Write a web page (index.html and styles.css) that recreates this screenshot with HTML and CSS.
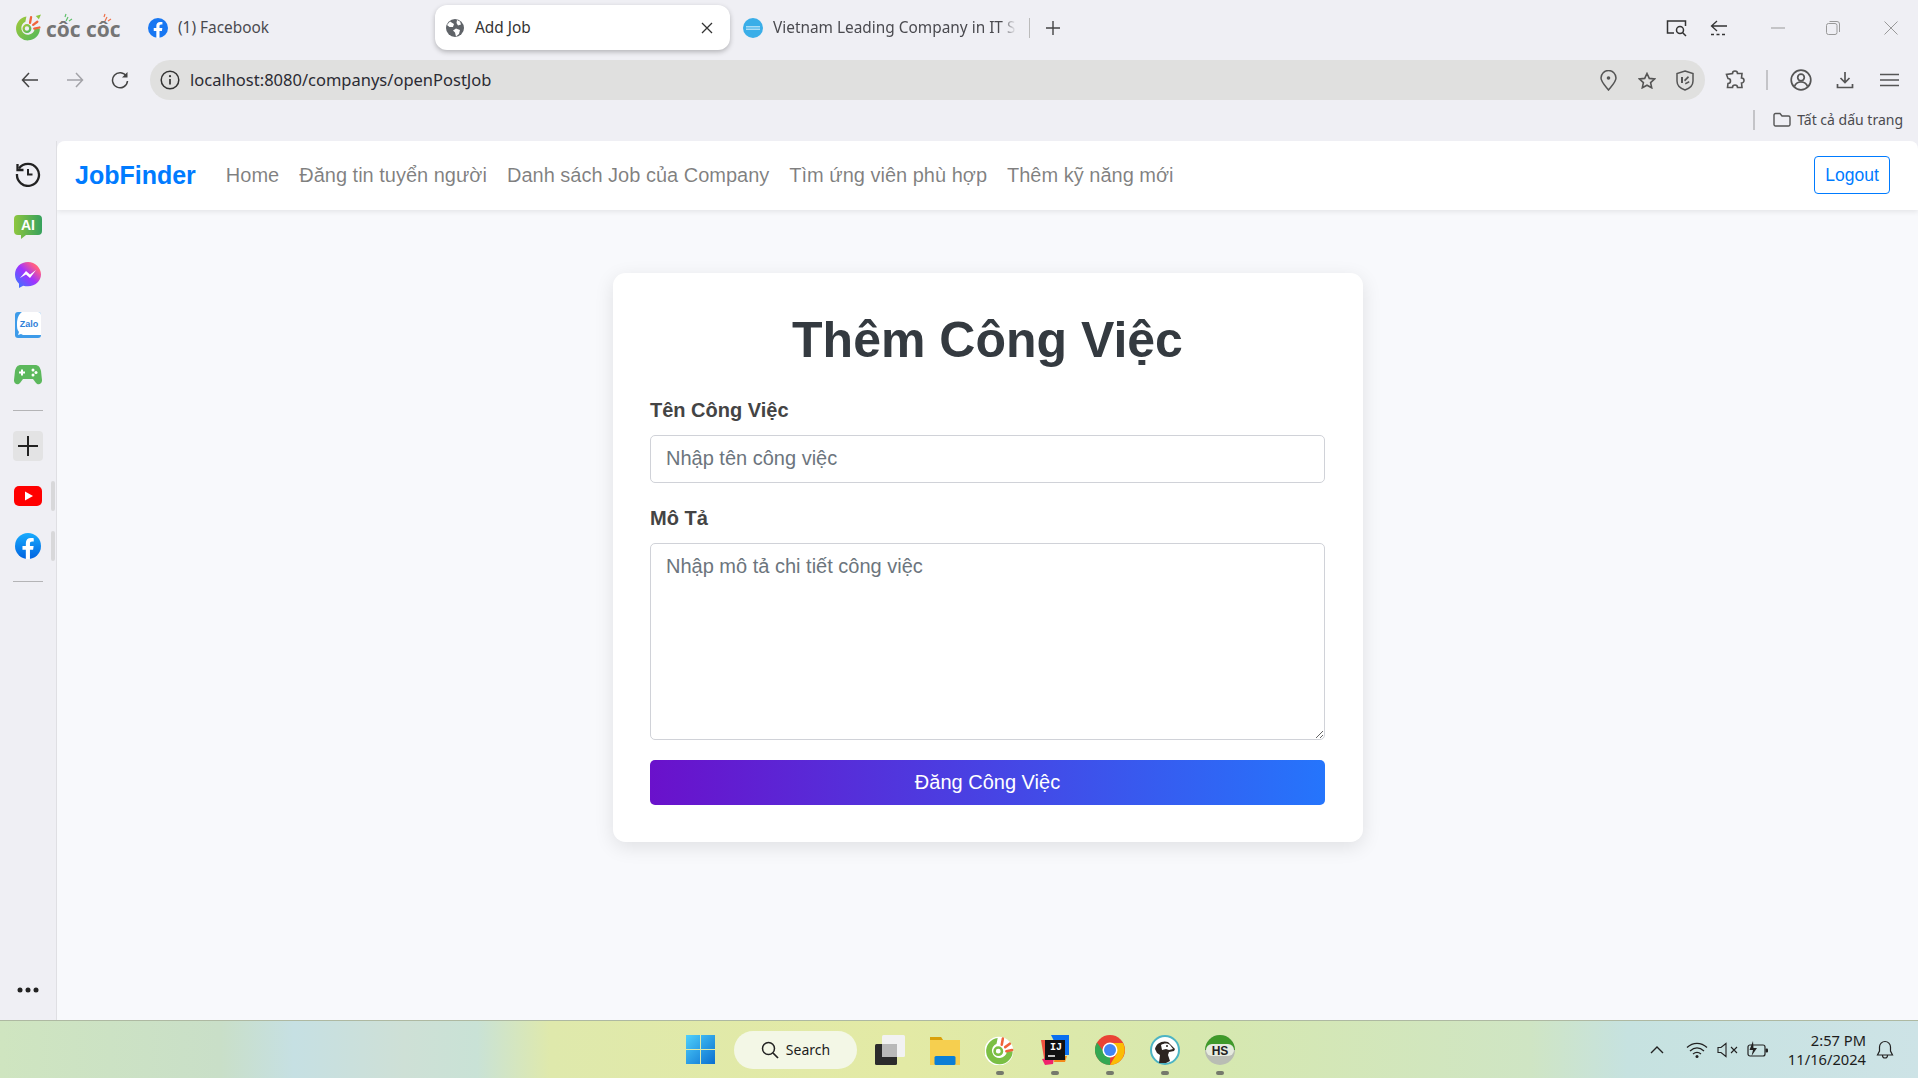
FILE: index.html
```html
<!DOCTYPE html>
<html lang="en">
<head>
  <meta charset="UTF-8">
  <meta name="viewport" content="width=device-width, initial-scale=1.0">
  <title>Add Job</title>
  <link rel="stylesheet" href="styles.css">
</head>
<body>
  <!-- Browser tabs -->
  <div class="tabstrip">
    <div class="brand">
      <svg class="brand-icon" width="27" height="27" viewBox="0 0 26 26">
        <defs><linearGradient id="cc" x1="0" y1="0" x2="1" y2="1"><stop offset="0" stop-color="#a4c93a"/><stop offset="1" stop-color="#4fb75a"/></linearGradient></defs>
        <path d="M11 2.500A11.500 11.500 0 1 0 24 14h-5A6.500 6.500 0 1 1 10 7.500z" fill="url(#cc)"/>
        <circle cx="11.500" cy="14" r="3.200" fill="none" stroke="url(#cc)" stroke-width="2.200"/>
        <path d="M14.500 8.500 15.500 3M17.500 10.500l4-3M18.500 14l5-1" stroke="#f0643a" stroke-width="2.200" stroke-linecap="round"/>
        <path d="M20 2l5-1.500-2 4.500z" fill="#8cc63f"/>
      </svg>
      <span class="brand-text">côc côc
        <svg class="brand-tick brand-tick-a" width="9" height="9" viewBox="0 0 9 9"><path d="M2 8 4 4M5 8l3-2M1 4l1-3" stroke="#5fbf6a" stroke-width="1.200"/></svg>
        <svg class="brand-tick brand-tick-b" width="9" height="9" viewBox="0 0 9 9"><path d="M2 8 4 4M5 8l3-2M1 4l1-3" stroke="#ee7048" stroke-width="1.200"/></svg>
      </span>
    </div>

    <div class="tab tab-fb">
      <svg width="20" height="20" viewBox="0 0 24 24"><circle cx="12" cy="12" r="12" fill="#1877f2"/><path d="M16.700 15.500l.5-3.500h-3.400V9.800c0-1 .5-1.900 2-1.900h1.500v-3s-1.400-.2-2.700-.2c-2.800 0-4.600 1.700-4.600 4.700V12H6.900v3.500H10V24h3.800v-8.500z" fill="#fff"/></svg>
      <span>(1) Facebook</span>
    </div>

    <div class="tab tab-active">
      <svg width="18" height="18" viewBox="0 0 18 18"><circle cx="9" cy="9" r="9" fill="#5f6368"/><path d="M4 2.500 8 5 7 8 3.500 8 1 6zM10 9.500l4 1.500-1 4-3 2.500-1-4-2-2zM11 1l3 1.500 1 3-3 1-1.500-2.500z" fill="#fff"/></svg>
      <span class="tab-title">Add Job</span>
      <svg width="12" height="12" viewBox="0 0 12 12"><path d="M1 1l10 10M11 1 1 11" stroke="#333" stroke-width="1.300"/></svg>
    </div>

    <div class="tab tab-vn">
      <svg width="20" height="20" viewBox="0 0 20 20"><circle cx="10" cy="10" r="10" fill="#3aaee8"/><rect x="3" y="8" width="14" height="1.500" fill="#a9dcf5"/><rect x="3" y="10.500" width="14" height="1.500" fill="#a9dcf5"/></svg>
      <span class="tab-fade">Vietnam Leading Company in IT S</span>
    </div>
    <span class="tab-sep"></span>
    <svg class="tab-new" width="16" height="16" viewBox="0 0 16 16"><path d="M8 1v14M1 8h14" stroke="#444" stroke-width="1.400"/></svg>

    <div class="window-btns">
      <svg class="capture" width="22" height="18" viewBox="0 0 22 18"><path d="M8 14H1.500V2h18v5" fill="none" stroke="#333" stroke-width="1.500"/><circle cx="14" cy="11" r="3.500" fill="none" stroke="#333" stroke-width="1.500"/><path d="M16.500 13.500 20 17" stroke="#333" stroke-width="1.500"/></svg>
      <svg class="sidepanel" width="18" height="16" viewBox="0 0 18 16"><path d="M7 1 1.500 6 7 11M2 6h15" fill="none" stroke="#333" stroke-width="1.300"/><path d="M1 14.500h16" stroke="#333" stroke-width="1.300" stroke-dasharray="3 2.500"/></svg>
      <svg class="win-min" width="14" height="14" viewBox="0 0 14 14"><path d="M0 7h14" stroke="#999" stroke-width="1"/></svg>
      <svg class="win-max" width="14" height="14" viewBox="0 0 14 14"><rect x=".5" y="2.500" width="10.500" height="11" rx="2" fill="none" stroke="#999"/><path d="M3.500.5H11A2.500 2.500 0 0 1 13.500 3v8" fill="none" stroke="#999"/></svg>
      <svg class="win-close" width="14" height="14" viewBox="0 0 14 14"><path d="M.5.5l13 13M13.500.5l-13 13" stroke="#999" stroke-width="1"/></svg>
    </div>
  </div>

  <!-- Address bar row -->
  <div class="toolbar">
    <svg class="nav-back" width="18" height="16" viewBox="0 0 18 16"><path d="M8 1 1.500 8 8 15M2 8h15" fill="none" stroke="#444" stroke-width="1.500"/></svg>
    <svg class="nav-fwd" width="18" height="16" viewBox="0 0 18 16"><path d="M10 1l6.500 7L10 15M16 8H1" fill="none" stroke="#a3a3a8" stroke-width="1.500"/></svg>
    <svg class="nav-reload" width="18" height="18" viewBox="0 0 18 18"><path d="M15.500 5.500A7.500 7.500 0 1 0 16.500 10" fill="none" stroke="#444" stroke-width="1.500"/><path d="M16.500 1v5.500H11z" fill="#444"/></svg>
    <div class="omnibox">
      <svg width="20" height="20" viewBox="0 0 20 20"><circle cx="10" cy="10" r="8.800" fill="none" stroke="#333" stroke-width="1.500"/><path d="M10 9v5.500" stroke="#333" stroke-width="1.700"/><circle cx="10" cy="6.200" r="1.100" fill="#333"/></svg>
      <span class="url">localhost:8080/companys/openPostJob</span>
      <svg class="omni-pin" width="17" height="21" viewBox="0 0 17 21"><path d="M8.500 20C4 14.500 1 11.500 1 8a7.500 7.500 0 0 1 15 0c0 3.500-3 6.500-7.500 12z" fill="none" stroke="#555" stroke-width="1.500"/><circle cx="8.500" cy="8" r="1.800" fill="#555"/></svg>
      <svg class="omni-star" width="18" height="17" viewBox="0 0 18 17"><path d="M9 1.500l2.300 4.900 5.200.6-3.900 3.600 1.100 5.200L9 13.200l-4.700 2.600 1.100-5.200L1.500 7l5.200-.6z" fill="none" stroke="#555" stroke-width="1.600"/></svg>
      <svg class="omni-shield" width="18" height="21" viewBox="0 0 18 21"><path d="M9 1l8 2.500V11c0 4.500-3.500 7.500-8 9-4.500-1.500-8-4.500-8-9V3.500z" fill="none" stroke="#555" stroke-width="1.500"/><path d="M5 13V7h2v6zM8 10l4-4 1 1.500-4 4zM9 13l4-2 .5 1.500-4 2z" fill="#555"/></svg>
    </div>
    <svg class="tool-ext" width="20" height="20" viewBox="0 0 20 20"><path d="M7.500 3.500a2.500 2.500 0 0 1 5 0H17l-.5 4.500a2.500 2.500 0 0 1 0 5l.5 4.500h-4.500a2.500 2.500 0 0 0-5 0H2.500L3 13.500a2.500 2.500 0 0 0 0-5L1.500 4.500z" fill="none" stroke="#555" stroke-width="1.600"/></svg>
    <span class="tool-sep"></span>
    <svg class="tool-profile" width="22" height="22" viewBox="0 0 22 22"><circle cx="11" cy="11" r="9.800" fill="none" stroke="#555" stroke-width="1.700"/><circle cx="11" cy="8.500" r="3.300" fill="none" stroke="#555" stroke-width="1.700"/><path d="M4.500 17.500c1-3 3.500-4.500 6.500-4.500s5.500 1.500 6.500 4.500" fill="none" stroke="#555" stroke-width="1.700"/></svg>
    <svg class="tool-down" width="18" height="18" viewBox="0 0 18 18"><path d="M9 1v10M4.500 7 9 11.500 13.500 7M1.500 13v3.500h15V13" fill="none" stroke="#555" stroke-width="1.700"/></svg>
    <svg class="tool-menu" width="19" height="14" viewBox="0 0 19 14"><path d="M0 1.500h19M0 7h19M0 12.500h19" stroke="#555" stroke-width="1.700"/></svg>
  </div>

  <!-- Bookmarks row -->
  <div class="bookmarks">
    <span class="bm-sep"></span>
    <svg width="18" height="15" viewBox="0 0 18 15"><path d="M1 3a1.500 1.500 0 0 1 1.500-1.500H7L9 4h6.500A1.500 1.500 0 0 1 17 5.500v7a1.500 1.500 0 0 1-1.500 1.500h-13A1.500 1.500 0 0 1 1 12.500z" fill="none" stroke="#555" stroke-width="1.400"/></svg>
    <span class="bm-label">Tất cả dấu trang</span>
  </div>

  <div class="main">
    <!-- Left sidebar -->
    <div class="sidebar">
      <div class="side-item side-history">
        <svg width="26" height="26" viewBox="0 0 26 26"><path d="M4 7.500A11 11 0 1 1 2 13" fill="none" stroke="#222" stroke-width="2.300"/><path d="M2.500 3v6h6" fill="none" stroke="#222" stroke-width="2.300"/><path d="M13 8v5.500h4.500" fill="none" stroke="#222" stroke-width="2"/></svg>
      </div>
      <div class="side-item side-ai">
        <svg width="28" height="25" viewBox="0 0 28 25"><defs><linearGradient id="aig" x1="0" x2="1"><stop offset="0" stop-color="#8ec63f"/><stop offset="1" stop-color="#36a15d"/></linearGradient></defs><path d="M4 0h20a4 4 0 0 1 4 4v12a4 4 0 0 1-4 4H12l-5 4v-4H4a4 4 0 0 1-4-4V4a4 4 0 0 1 4-4z" fill="url(#aig)"/><text x="14" y="15" text-anchor="middle" class="svg-ai">AI</text></svg>
      </div>
      <div class="side-item">
        <svg width="26" height="26" viewBox="0 0 26 26"><defs><linearGradient id="msg" x1="0" y1="1" x2="1" y2="0"><stop offset="0" stop-color="#2a7fff"/><stop offset=".5" stop-color="#a033ff"/><stop offset=".8" stop-color="#ff5c87"/><stop offset="1" stop-color="#ff7a5c"/></linearGradient></defs><path d="M13 0C5.700 0 0 5.300 0 12.500c0 3.700 1.500 7 4 9.200V26l4.200-2.300c1.500.4 3.100.6 4.800.6 7.300 0 13-5.300 13-11.800S20.300 0 13 0z" fill="url(#msg)"/><path d="M5 16l6-7 4 3.500L21 8l-6 8-4-3.500z" fill="#fff"/></svg>
      </div>
      <div class="side-item">
        <svg width="26" height="26" viewBox="0 0 26 26"><rect width="26" height="26" rx="3" fill="#3d9be9"/><path d="M7 0h16a3 3 0 0 1 3 3v20H8l-2-1-3 1 1-3C2 18 2 15 2 12 2 6 4 2 7 0z" fill="#fff"/><text x="14" y="15" text-anchor="middle" class="svg-zalo">Zalo</text></svg>
      </div>
      <div class="side-item">
        <svg width="28" height="20" viewBox="0 0 28 20"><path d="M7 0h14c3.500 0 5 2 6 6l1 9c.3 3.500-3.500 6-6 3l-3-4H9l-3 4c-2.500 3-6.300.5-6-3l1-9c1-4 2.500-6 6-6z" fill="#5cb85c"/><path d="M5 7.500h6M8 4.500v6" stroke="#fff" stroke-width="2"/><circle cx="19" cy="5" r="1.500" fill="#fff"/><circle cx="19" cy="10" r="1.500" fill="#fff"/><circle cx="22" cy="7.500" r="1.500" fill="#fff"/></svg>
      </div>
      <div class="side-sep"></div>
      <div class="side-item">
        <div class="side-add">
          <svg width="20" height="20" viewBox="0 0 20 20"><path d="M10 0v20M0 10h20" stroke="#222" stroke-width="2"/></svg>
        </div>
      </div>
      <div class="side-item side-open">
        <svg width="28" height="20" viewBox="0 0 28 20"><rect width="28" height="20" rx="5" fill="#f00"/><path d="M11 5.500v9l8-4.500z" fill="#fff"/></svg>
      </div>
      <div class="side-item side-open">
        <svg width="26" height="26" viewBox="0 0 24 24"><defs><linearGradient id="fbg" x1="0" y1="0" x2="0" y2="1"><stop offset="0" stop-color="#18acfe"/><stop offset="1" stop-color="#0163e0"/></linearGradient></defs><circle cx="12" cy="12" r="12" fill="url(#fbg)"/><path d="M16.700 15.500l.5-3.500h-3.400V9.800c0-1 .5-1.900 2-1.900h1.500v-3s-1.400-.2-2.700-.2c-2.800 0-4.600 1.700-4.600 4.700V12H6.900v3.500H10V24h3.800v-8.500z" fill="#fff"/></svg>
      </div>
      <div class="side-sep"></div>
      <div class="side-item side-more">
        <svg width="22" height="6" viewBox="0 0 22 6"><circle cx="3" cy="3" r="2.500" fill="#222"/><circle cx="11" cy="3" r="2.500" fill="#222"/><circle cx="19" cy="3" r="2.500" fill="#222"/></svg>
      </div>
    </div>

    <!-- The page itself -->
    <div class="page">
      <nav class="navbar">
        <a class="navbar-brand" href="#">JobFinder</a>
        <a class="nav-link" href="#">Home</a>
        <a class="nav-link" href="#">Đăng tin tuyển người</a>
        <a class="nav-link" href="#">Danh sách Job của Company</a>
        <a class="nav-link" href="#">Tìm ứng viên phù hợp</a>
        <a class="nav-link" href="#">Thêm kỹ năng mới</a>
        <button class="btn-logout" type="button">Logout</button>
      </nav>

      <div class="form-container">
        <h1>Thêm Công Việc</h1>
        <form>
          <div class="form-group">
            <label for="title">Tên Công Việc</label>
            <input type="text" id="title" placeholder="Nhập tên công việc">
          </div>
          <div class="form-group">
            <label for="description">Mô Tả</label>
            <textarea id="description" placeholder="Nhập mô tả chi tiết công việc"></textarea>
          </div>
          <button class="btn-submit" type="submit">Đăng Công Việc</button>
        </form>
      </div>
    </div>
  </div>

  <!-- Windows taskbar -->
  <div class="taskbar">
    <svg class="task-start" width="29" height="29" viewBox="0 0 29 29"><defs><linearGradient id="win" x1="0" y1="0" x2="1" y2="1"><stop offset="0" stop-color="#4fd0fb"/><stop offset="1" stop-color="#0a6fd0"/></linearGradient></defs><path d="M0 0h14v14H0zM15 0h14v14H15zM0 15h14v14H0zM15 15h14v14H15z" fill="url(#win)"/></svg>
    <div class="task-search">
      <svg width="18" height="18" viewBox="0 0 18 18"><circle cx="7.500" cy="7.500" r="6" fill="none" stroke="#222" stroke-width="1.500"/><path d="M12 12l5 5" stroke="#222" stroke-width="1.700"/></svg>
      <span>Search</span>
    </div>
    <svg class="task-icon" width="30" height="30" viewBox="0 0 30 30"><rect x="0" y="9" width="22" height="21" rx="1.500" fill="#2b2b2b"/><rect x="7" y="0" width="23" height="22" rx="1.500" fill="#f2f2f2"/><rect x="7" y="9" width="15" height="13" fill="#b9b9b9"/></svg>
    <svg class="task-icon" width="30" height="30" viewBox="0 0 30 30"><path d="M0 2h11l2 3h17v25H0z" fill="#f6cf4f"/><path d="M0 2h11l2 3H0z" fill="#d9a00a"/><rect x="4" y="21" width="21" height="9" rx="1.500" fill="#0c7fd6" transform="translate(.5 0)"/></svg>
    <div class="task-icon task-running">
      <svg width="30" height="30" viewBox="0 0 26 26"><circle cx="12" cy="14" r="12.500" fill="#fff"/><path d="M11 2.500A11.500 11.500 0 1 0 24 14h-5A6.500 6.500 0 1 1 10 7.500z" fill="#7bbf44"/><circle cx="11.500" cy="14" r="3.200" fill="none" stroke="#7bbf44" stroke-width="2.200"/><path d="M14.500 8.500 15.500 3M17.500 10.500l4-3M18.500 14l5-1" stroke="#f0643a" stroke-width="2.200" stroke-linecap="round"/></svg>
    </div>
    <div class="task-icon task-running">
      <svg width="30" height="30" viewBox="0 0 30 30"><path d="M11 0h18v20l-8 0z" fill="#0a6ff0"/><path d="M1 5h10v22l-6 2z" fill="#f0523e"/><path d="M15 21h12l-2 6H14z" fill="#f48a1a"/><path d="M2 24 14 22l-1 7-8 1z" fill="#f0246c"/><rect x="5" y="5" width="20" height="20" fill="#111"/><text x="10" y="15" class="svg-ij">IJ</text><path d="M8 21h7" stroke="#fff" stroke-width="1.500"/></svg>
    </div>
    <div class="task-icon task-running">
      <svg width="30" height="30" viewBox="0 0 30 30"><circle cx="15" cy="15" r="15" fill="#ea4335"/><path d="M15 30A15 15 0 0 1 2 7.500L9 17l6 5z" fill="#34a853"/><path d="M15 8h13a15 15 0 0 1-13 22l7-12z" fill="#fbbc04"/><circle cx="15" cy="15" r="7.500" fill="#fff"/><circle cx="15" cy="15" r="6" fill="#4285f4"/></svg>
    </div>
    <div class="task-icon task-running">
      <svg width="30" height="30" viewBox="0 0 30 30"><circle cx="15" cy="15" r="14" fill="#fff" stroke="#4cb4c4" stroke-width="2"/><path d="M5 14c1-6 8-9 13-7l3 3 4 4-1 2-5 1-1 3 2 6-4 2H9l1-8-3-2z" fill="#2c2420"/><path d="M11 10c3-2 7-2 9 0l3 4-4 1-3-1-4 1z" fill="#fff"/><circle cx="17" cy="11" r="1" fill="#2c2420"/></svg>
    </div>
    <div class="task-icon task-running">
      <svg width="30" height="30" viewBox="0 0 30 30"><circle cx="15" cy="15" r="15" fill="#b9bdb4"/><path d="M0 15a15 15 0 0 1 30 0z" fill="#3f9a2a"/><rect x="1" y="9" width="28" height="12" rx="6" fill="#e6ebdf"/><text x="15" y="20" text-anchor="middle" class="svg-hs">HS</text></svg>
    </div>

    <div class="tray">
      <svg class="tray-up" width="14" height="8" viewBox="0 0 14 8"><path d="M1 7l6-6 6 6" fill="none" stroke="#222" stroke-width="1.400"/></svg>
      <div class="tray-group">
        <svg width="24" height="18" viewBox="0 0 24 18"><path d="M2 6.500c6-5.500 14-5.500 20 0M5 10c4.500-4 9.500-4 14 0M8 13c2.500-2 5.500-2 8 0" fill="none" stroke="#222" stroke-width="1.300"/><circle cx="12" cy="15.500" r="1.500" fill="#222"/></svg>
        <svg width="22" height="16" viewBox="0 0 22 16"><path d="M1 5.500h3L9 1.500v13l-5-4H1z" fill="none" stroke="#222" stroke-width="1.100"/><path d="M14 5l6 6M20 5l-6 6" stroke="#222" stroke-width="1.100"/></svg>
        <svg width="24" height="18" viewBox="0 0 24 18"><rect x="2" y="4" width="17" height="11" rx="2" fill="none" stroke="#222" stroke-width="1.200"/><rect x="19.500" y="7.500" width="2.500" height="4" rx="1" fill="#222"/><path d="M7 0 3.500 9H7l-1.500 6L11 7H7.500z" fill="#222"/></svg>
      </div>
      <div class="clock">
        <div>2:57 PM</div>
        <div>11/16/2024</div>
      </div>
      <svg class="tray-bell" width="18" height="20" viewBox="0 0 18 20"><path d="M9 1.500A5.500 5.500 0 0 0 3.500 7v4L1.500 15h15l-2-4V7A5.500 5.500 0 0 0 9 1.500zM6.500 15.500a2.500 2.500 0 0 0 5 0" fill="none" stroke="#222" stroke-width="1.200"/></svg>
    </div>
  </div>
</body>
</html>
```
FILE: styles.css
```css
* {
  box-sizing: border-box;
}
html, body {
  height: 100%;
}
body {
  margin: 0;
  display: flex;
  flex-direction: column;
  height: 1078px;
  overflow: hidden;
  background: #efeff4;
  font-family: "Liberation Sans", Arial, sans-serif;
}
svg {
  display: block;
  flex-shrink: 0;
}

/* browser chrome */
.tabstrip {
  display: flex;
  align-items: center;
  height: 55px;
  font-family: "Noto Sans", sans-serif;
  font-size: 15.4px;
  line-height: 20px;
  color: #4a4a4f;
}
.brand {
  display: flex;
  align-items: center;
  width: 148px;
  padding-left: 15px;
}
.brand-text {
  position: relative;
  margin-left: 4px;
  margin-top: 2px;
  font-family: "Open Sans", sans-serif;
  font-weight: 700;
  font-size: 21px;
  line-height: 20px;
  color: #757575;
  white-space: nowrap;
}
.brand-tick {
  position: absolute;
  top: -6px;
}
.brand-tick-a {
  left: 18px;
}
.brand-tick-b {
  left: 57px;
}
.tab {
  display: flex;
  align-items: center;
  height: 45px;
}
.tab span {
  padding-top: 1px;
}
.tab-fb {
  width: 287px;
  gap: 10px;
}
.tab-active {
  width: 295px;
  padding: 0 17px 0 11px;
  background: #fff;
  border-radius: 12px;
  box-shadow: 0 2px 5px rgba(0, 0, 0, .25);
  color: #333;
}
.tab-title {
  margin-left: 11px;
  flex: 1;
}
.tab-vn {
  margin-left: 13px;
  gap: 10px;
}
.tab-fade {
  display: block;
  width: 243px;
  white-space: nowrap;
  -webkit-mask-image: linear-gradient(to right, #000 94%, transparent);
  mask-image: linear-gradient(to right, #000 94%, transparent);
}
.tab-sep {
  width: 1px;
  height: 20px;
  margin-left: 13px;
  background: #bbb;
}
.tab-new {
  margin-left: 15px;
}
.window-btns {
  display: flex;
  align-items: center;
  margin-left: auto;
  padding-right: 20px;
}
.sidepanel {
  margin-left: 22px;
}
.win-min {
  margin-left: 43px;
}
.win-max {
  margin-left: 41px;
}
.win-close {
  margin-left: 44px;
}

.toolbar {
  display: flex;
  align-items: center;
  height: 40px;
  margin-top: 5px;
  padding-left: 21px;
}
.nav-fwd {
  margin-left: 27px;
}
.nav-reload {
  margin-left: 27px;
}
.omnibox {
  display: flex;
  align-items: center;
  width: 1555px;
  height: 40px;
  margin-left: 21px;
  padding: 0 11px 0 10px;
  background: #e0e0df;
  border-radius: 20px;
}
.url {
  margin-left: 10px;
  padding-bottom: 2px;
  font-family: "Noto Sans", sans-serif;
  font-size: 16.5px;
  color: #2b2b33;
  flex: 1;
}
.omni-star {
  margin-left: 21px;
}
.omni-shield {
  margin-left: 20px;
}
.tool-ext {
  margin-left: 20px;
}
.tool-sep {
  width: 2px;
  height: 20px;
  margin-left: 21px;
  background: #c4c4c8;
}
.tool-profile {
  margin-left: 22px;
}
.tool-down {
  margin-left: 24px;
}
.tool-menu {
  margin-left: 26px;
}

.bookmarks {
  display: flex;
  align-items: center;
  justify-content: flex-end;
  height: 41px;
  padding-right: 15px;
  padding-bottom: 2px;
  font-family: "Noto Sans", sans-serif;
  font-size: 14px;
  color: #4a4a4f;
}
.bm-sep {
  width: 2px;
  height: 20px;
  margin-right: 18px;
  background: #c4c4c8;
}
.bm-label {
  margin-left: 6px;
}

/* sidebar + page */
.main {
  display: flex;
  flex: 1;
  min-height: 0;
}
.sidebar {
  display: flex;
  flex-direction: column;
  align-items: center;
  width: 57px;
  padding: 9px 0 5px;
  border-right: 1px solid #dfdfe3;
}
.side-item {
  position: relative;
  display: flex;
  align-items: center;
  justify-content: center;
  width: 100%;
  height: 50px;
}
.side-history svg {
  margin-bottom: 2px;
}
.side-ai svg {
  margin-top: 4px;
}
.side-open::after {
  content: "";
  position: absolute;
  right: 1px;
  top: 10px;
  width: 4px;
  height: 30px;
  border-radius: 2px;
  background: #d8d8da;
}
.side-sep {
  width: 30px;
  height: 1px;
  margin: 10px 0;
  background: #b4b4b6;
}
.side-add {
  display: flex;
  align-items: center;
  justify-content: center;
  width: 30px;
  height: 30px;
  border-radius: 4px;
  background: #e3e3e4;
}
.side-more {
  margin-top: auto;
}
.svg-ai {
  font: 700 14px "Liberation Sans", sans-serif;
  fill: #fff;
}
.svg-zalo {
  font: 700 9px "Liberation Sans", sans-serif;
  fill: #2f80d8;
}
.svg-ij {
  font: 700 10px "Liberation Mono", monospace;
  fill: #fff;
}
.svg-hs {
  font: 700 12px "Liberation Sans", sans-serif;
  fill: #222;
}

.page {
  flex: 1;
  background: #f8f9fc;
  border-top-left-radius: 8px;
  border-top-right-radius: 8px;
  overflow: hidden;
}
.navbar {
  display: flex;
  align-items: center;
  height: 69px;
  padding: 0 28px 0 18px;
  background: #fff;
  box-shadow: 0 2px 5px rgba(0, 0, 0, .08);
}
.navbar-brand {
  margin-right: 20px;
  font-size: 25px;
  font-weight: 700;
  color: #007bff;
  text-decoration: none;
}
.nav-link {
  padding: 0 10px;
  font-size: 20px;
  color: rgba(0, 0, 0, .5);
  text-decoration: none;
}
.btn-logout {
  width: 76px;
  height: 38px;
  margin-left: auto;
  margin-bottom: 2px;
  padding: 2px 0 0;
  font-family: inherit;
  font-size: 17.5px;
  color: #007bff;
  background: transparent;
  border: 1px solid #007bff;
  border-radius: 4px;
}

/* form card */
.form-container {
  width: 750px;
  margin: 63px auto 0;
  padding: 36.5px 37.5px 37.5px;
  background: #fff;
  border-radius: 12.5px;
  box-shadow: 0 5px 19px rgba(0, 0, 0, .1);
}
h1 {
  margin: 0 0 25px;
  font-size: 50px;
  line-height: 60px;
  font-weight: 700;
  text-align: center;
  color: #343a40;
}
.form-group {
  margin-bottom: 20px;
}
label {
  display: block;
  margin-bottom: 10px;
  font-size: 20px;
  line-height: 30px;
  font-weight: 700;
  color: #444;
}
input, textarea {
  display: block;
  width: 100%;
  padding: 11px 15px;
  font-family: inherit;
  font-size: 20px;
  line-height: 24px;
  color: #495057;
  background: #fff;
  border: 1.5px solid #d0d2d8;
  border-radius: 5px;
  outline: none;
}
input {
  height: 48px;
}
textarea {
  height: 197px;
  padding-top: 10px;
}
input::placeholder, textarea::placeholder {
  color: #6c757d;
  opacity: 1;
}
.btn-submit {
  display: block;
  width: 100%;
  height: 45px;
  padding: 0;
  font-family: inherit;
  font-size: 20px;
  color: #fff;
  background: linear-gradient(to right, #6a11cb, #2575fc);
  border: none;
  border-radius: 5px;
}

/* taskbar */
.taskbar {
  position: relative;
  display: flex;
  align-items: center;
  height: 58px;
  padding-left: 686px;
  gap: 25px;
  border-top: 1px solid #aeb9a2;
  background: linear-gradient(to right, #cfe5c0 0, #c9dfc8 220px, #c6e0e3 294px, #cee0d6 404px, #c9e2d6 477px, #dfe9ac 550px, #e3eaa5 905px, #d6e8b0 1223px, #cfe5c4 1530px, #c6e2e0 1627px, #cde3e6 1918px);
  font-family: "Noto Sans", sans-serif;
  color: #1c1c1c;
}
.task-start {
  margin-right: -6px;
}
.task-search {
  display: flex;
  align-items: center;
  justify-content: center;
  gap: 7px;
  width: 123px;
  height: 38px;
  margin-right: -7px;
  border-radius: 19px;
  background: #f3f7e6;
  font-size: 14px;
}
.task-icon {
  position: relative;
}
.task-running::after {
  content: "";
  position: absolute;
  left: 11px;
  bottom: -10px;
  width: 8px;
  height: 4px;
  border-radius: 2px;
  background: #75796c;
}
.tray {
  display: flex;
  align-items: center;
  margin-left: auto;
  padding-right: 24px;
}
.tray-group {
  display: flex;
  align-items: center;
  gap: 7.5px;
  margin-left: 21px;
}
.clock {
  width: 96px;
  font-size: 14.7px;
  line-height: 19px;
  text-align: right;
}
.tray-bell {
  margin-left: 10px;
}
```
